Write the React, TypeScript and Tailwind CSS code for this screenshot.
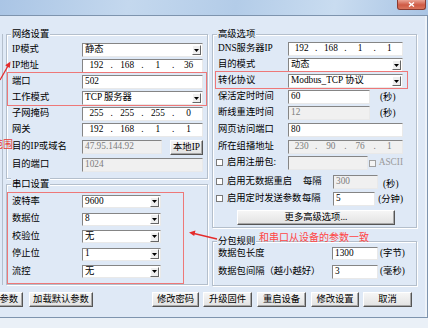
import React from "react";

const fieldBorder =
  "border border-t-[#858585] border-l-[#858585] border-r-[#e9e9e9] border-b-[#e9e9e9]";

function Box({
  children,
  disabled,
  className = "",
}: {
  children?: React.ReactNode;
  disabled?: boolean;
  className?: string;
}) {
  return (
    <div
      className={`${fieldBorder} ${
        disabled ? "bg-[#f0f0f0] text-[#7c7c7c]" : "bg-white text-black"
      } flex h-full items-center overflow-hidden whitespace-nowrap pl-[2px] ${className}`}
    >
      {children}
    </div>
  );
}

function Combo({ value, className = "" }: { value: string; className?: string }) {
  return (
    <div className={`${fieldBorder} flex h-full items-center bg-white ${className}`}>
      <span className="flex-1 whitespace-nowrap pl-[2px]">{value}</span>
      <span className="mr-[1px] flex h-[10px] w-[9px] items-center justify-center border border-t-white border-l-white border-r-[#666666] border-b-[#666666] bg-[#efefef]">
        <svg width="5" height="3" viewBox="0 0 5 3">
          <path d="M0 0H5L2.5 3Z" fill="#000" />
        </svg>
      </span>
    </div>
  );
}

function IPBox({ parts, disabled }: { parts: string[]; disabled?: boolean }) {
  return (
    <div
      className={`${fieldBorder} ${
        disabled ? "bg-[#f0f0f0] text-[#7c7c7c]" : "bg-white text-black"
      } flex h-full items-center`}
    >
      {parts.map((p, i) => (
        <React.Fragment key={i}>
          <span className="flex-1 text-center">{p}</span>
          {i < 3 && <span className="w-[4px] text-center">.</span>}
        </React.Fragment>
      ))}
    </div>
  );
}

function Check() {
  return <span className="-ml-[2px] mr-[4px] inline-block h-[7px] w-[7px] shrink-0 border border-[#7a7a7a] bg-white" />;
}

function Btn({ children, className = "" }: { children: React.ReactNode; className?: string }) {
  return (
    <div
      className={`flex h-[15px] shrink-0 items-center justify-center whitespace-nowrap border border-t-white border-l-white border-r-[#555555] border-b-[#555555] bg-[linear-gradient(#f6f6f6,#e2e2e2)] shadow-[inset_-1px_-1px_0_#a8a8a8] ${className}`}
    >
      {children}
    </div>
  );
}

function Row({
  label,
  children,
  className = "",
  labelW = "w-[70px]",
}: {
  label: React.ReactNode;
  children: React.ReactNode;
  className?: string;
  labelW?: string;
}) {
  return (
    <div className={`flex h-[14px] shrink-0 items-center ${className}`}>
      <div className={`${labelW} shrink-0 whitespace-nowrap`}>{label}</div>
      {children}
    </div>
  );
}

const group =
  "flex flex-col border border-[#b4bfcc] shadow-[inset_1px_1px_0_#ffffff,1px_1px_0_#ffffff]";

function Legend({ children }: { children: React.ReactNode }) {
  return (
    <div className="-mt-[7px] -ml-[1px] h-[12px] w-fit bg-[#dfe9f6] px-[1px] leading-[12px]">
      {children}
    </div>
  );
}

export default function App() {
  return (
    <div className="relative h-[328px] w-[442px] overflow-hidden bg-white font-[family-name:Liberation_Serif,Noto_Sans_CJK_SC,serif] text-[9.3px] leading-none text-black">
      {/* title bar */}
      <div className="flex h-[15px] w-[428px] justify-end bg-[linear-gradient(100deg,#aac5e5_0%,#c4d8ee_30%,#b3cce8_55%,#c9dcf0_78%,#a9c4e4_100%)] pr-[2px]">
        <div className="flex h-[10px] w-[29px] items-center justify-center rounded-b-[3px] border border-t-0 border-[#8a3a30] bg-[linear-gradient(#eaa596,#cf5a45_55%,#d9745c)]">
          <svg width="7" height="5" viewBox="0 0 7 5">
            <path d="M1 0.5L6 4.5M6 0.5L1 4.5" stroke="#fff" strokeWidth="1.4" />
          </svg>
        </div>
      </div>

      {/* window body */}
      <div className="flex h-[303px] w-[428px] flex-col border-y border-r border-[#7e94ae] bg-[#dfe9f6] shadow-[inset_-2px_0_0_#eef3f9]">
        <div className="mt-[18px] flex">
          <div className="h-[251px] w-[3px] shrink-0 border-r border-[#b4bfcc]" />

          {/* left column */}
          <div className="ml-[3px] flex w-[202px] shrink-0 flex-col">
            <div className={`${group} h-[145px] pl-[5px] pr-[4px]`}>
              <Legend>网络设置</Legend>
              <Row label="IP模式" className="mt-[3px]">
                <div className="h-full flex-1">
                  <Combo value="静态" />
                </div>
              </Row>
              <Row label="IP地址" className="mt-[2px]">
                <div className="h-full flex-1">
                  <IPBox parts={["192", "168", "1", "36"]} />
                </div>
              </Row>
              <Row label="端口" className="mt-[2px]">
                <div className="h-full flex-1">
                  <Box>502</Box>
                </div>
              </Row>
              <Row label="工作模式" className="mt-[2px]">
                <div className="h-full flex-1">
                  <Combo value="TCP 服务器" />
                </div>
              </Row>
              <Row label="子网掩码" className="mt-[2px]">
                <div className="h-full flex-1">
                  <IPBox parts={["255", "255", "255", "0"]} />
                </div>
              </Row>
              <Row label="网关" className="mt-[2px]">
                <div className="h-full flex-1">
                  <IPBox parts={["192", "168", "1", "1"]} />
                </div>
              </Row>
              <div className="mt-[3px] flex h-[15px] shrink-0 items-start">
                <div className="flex h-[14px] w-[70px] shrink-0 items-center whitespace-nowrap">目的IP或域名</div>
                <div className="h-[14px] w-[80px]">
                  <Box disabled>47.95.144.92</Box>
                </div>
                <Btn className="ml-auto w-[33px]">本地IP</Btn>
              </div>
              <Row label="目的端口" className="mt-[3px]">
                <div className="h-full flex-1">
                  <Box disabled>1024</Box>
                </div>
              </Row>
            </div>

            <div className={`${group} mt-[5px] h-[101px] pl-[5px] pr-[4px]`}>
              <Legend>串口设置</Legend>
              {[
                ["波特率", "9600"],
                ["数据位", "8"],
                ["校验位", "无"],
                ["停止位", "1"],
                ["流控", "无"],
              ].map(([l, v], i) => (
                <div
                  key={l}
                  className={`flex h-[13px] shrink-0 items-center ${i === 0 ? "mt-[5px]" : "mt-[4.5px]"}`}
                >
                  <div className="w-[70px] shrink-0">{l}</div>
                  <div className="h-full w-[79px]">
                    <Combo value={v} />
                  </div>
                </div>
              ))}
            </div>
          </div>

          {/* right column */}
          <div className="ml-[4px] flex w-[205px] shrink-0 flex-col">
            <div className={`${group} h-[194px] pl-[5px] pr-[13px]`}>
              <Legend>高级选项</Legend>
              <Row label="DNS服务器IP" className="mt-[2px]">
                <div className="h-full flex-1">
                  <IPBox parts={["192", "168", "1", "1"]} />
                </div>
              </Row>
              <Row label="目的模式" className="mt-[2px]">
                <div className="h-full flex-1">
                  <Combo value="动态" />
                </div>
              </Row>
              <Row label="转化协议" className="mt-[2px]">
                <div className="h-full flex-1">
                  <Combo value="Modbus_TCP 协议" />
                </div>
              </Row>
              <Row label="保活定时时间" className="mt-[2px]">
                <div className="h-full w-[82px]">
                  <Box>60</Box>
                </div>
                <span className="ml-[10px] mt-[2px] whitespace-nowrap">(秒)</span>
              </Row>
              <Row label="断线重连时间" className="mt-[2px]">
                <div className="h-full w-[82px]">
                  <Box disabled>12</Box>
                </div>
                <span className="ml-[10px] mt-[1px] whitespace-nowrap">(秒)</span>
              </Row>
              <Row label="网页访问端口" className="mt-[3px]">
                <div className="h-full flex-1">
                  <Box>80</Box>
                </div>
              </Row>
              <Row label="所在组播地址" className="mt-[3px]">
                <div className="h-full flex-1">
                  <IPBox parts={["230", "90", "76", "1"]} disabled />
                </div>
              </Row>
              <Row
                className="mt-[2px]"
                label={
                  <span className="flex items-center">
                    <Check />
                    启用注册包:
                  </span>
                }
              >
                <div className="h-full w-[89px]">
                  <Box disabled />
                </div>
                <span className="ml-[1px] inline-block h-[7px] w-[7px] shrink-0 border border-[#a0a0a0] bg-[#f4f4f4]" />
                <span className="ml-[3px] text-[#9a9a9a]">ASCII</span>
              </Row>
              <Row
                className="mt-[5px]"
                labelW="w-[85px]"
                label={
                  <span className="flex items-center">
                    <Check />
                    启用无数据重启
                  </span>
                }
              >
                <span className="w-[30px] shrink-0">每隔</span>
                <div className="h-full w-[45px]">
                  <Box disabled>300</Box>
                </div>
                <span className="ml-[5px] mt-[6px] whitespace-nowrap">(秒)</span>
              </Row>
              <Row
                className="mt-[3px]"
                labelW="w-[84px]"
                label={
                  <span className="flex items-center">
                    <Check />
                    启用定时发送参数
                  </span>
                }
              >
                <span className="w-[31px] shrink-0">每隔</span>
                <div className="h-full w-[45px]">
                  <Box>5</Box>
                </div>
                <span className="ml-[3px] mt-[2px] whitespace-nowrap">(分钟)</span>
              </Row>
              <Btn className="ml-[19px] mt-[4px] w-[158px]">更多高级选项...</Btn>
            </div>

            <div className={`${group} mt-[13px] h-[45px] pl-[5px] pr-[4px]`}>
              <Legend>分包规则</Legend>
              <div className="flex h-[13px] shrink-0 items-center">
                <div className="w-[114px] shrink-0">数据包长度</div>
                <div className="h-full w-[46px]">
                  <Box>1300</Box>
                </div>
                <span className="ml-[2px] whitespace-nowrap">(字节)</span>
              </div>
              <div className="mt-[5px] flex h-[14px] shrink-0 items-center">
                <div className="w-[114px] shrink-0 whitespace-nowrap">数据包间隔（越小越好）</div>
                <div className="h-full w-[46px]">
                  <Box>3</Box>
                </div>
                <span className="ml-[2px] whitespace-nowrap">(毫秒)</span>
              </div>
            </div>
          </div>
        </div>

        {/* bottom buttons */}
        <div className="mt-[6px] flex">
          <Btn className="w-[23px] justify-end border-l-0 pr-[4px]">参数</Btn>
          <Btn className="ml-[6px] w-[64px]">加载默认参数</Btn>
          <Btn className="ml-[59px] w-[47px]">修改密码</Btn>
          <Btn className="ml-[4px] w-[49px]">升级固件</Btn>
          <Btn className="ml-[5px] w-[49px]">重启设备</Btn>
          <Btn className="ml-[5px] w-[48px]">修改设置</Btn>
          <Btn className="ml-[4px] w-[49px]">取消</Btn>
        </div>
      </div>
      <div className="h-[10px] w-[428px] bg-[#eaf0f7]" />

      {/* annotations */}
      <div className="pointer-events-none absolute left-[7px] top-[72px] h-[34px] w-[200px] border border-[#ee7878]" />
      <div className="pointer-events-none absolute left-[215px] top-[71px] h-[18px] w-[193px] border border-[#ee7878]" />
      <div className="pointer-events-none absolute left-[7px] top-[192px] h-[92px] w-[177px] border border-[#ee7878]" />
      <div className="pointer-events-none absolute left-[-7px] top-[140px] text-[10px] leading-none text-[#e53935]">范围</div>
      <div className="pointer-events-none absolute left-[259px] top-[233px] whitespace-nowrap text-[10px] leading-none text-[#ff4545]">
        和串口从设备的参数一致
      </div>
      <svg className="pointer-events-none absolute left-0 top-0" width="442" height="328" viewBox="0 0 442 328">
        <path d="M0 80L8 66" stroke="#e52b2b" strokeWidth="1.3" fill="none" />
        <path d="M10.5 61.5L9.8 68L5.2 65.3Z" fill="#e52b2b" />
        <path d="M217 239L194 233.5" stroke="#e52b2b" strokeWidth="1.3" fill="none" />
        <path d="M189 232.5L195.5 230.5L194.2 236Z" fill="#e52b2b" />
      </svg>
    </div>
  );
}
